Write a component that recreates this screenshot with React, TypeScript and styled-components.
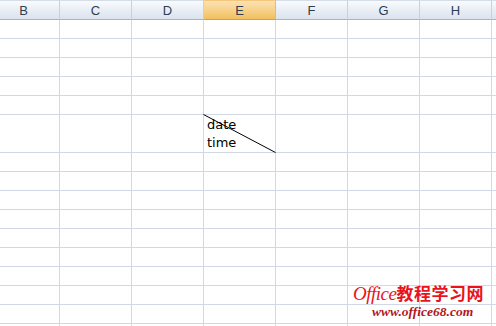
import React from "react";
import styled, { createGlobalStyle } from "styled-components";

const GlobalStyle = createGlobalStyle`
  html, body {
    margin: 0;
    padding: 0;
    background: #fff;
    overflow: hidden;
  }
`;

const Page = styled.div`
  position: relative;
  width: 496px;
  height: 326px;
  overflow: hidden;
  background: #fff;
`;

const Sheet = styled.div`
  display: grid;
  grid-template-columns: repeat(8, 72px);
  margin-left: -12px;
  width: max-content;
`;

const HeaderCell = styled.div<{ $active?: boolean }>`
  box-sizing: border-box;
  height: 20px;
  display: flex;
  align-items: center;
  justify-content: center;
  font-family: "Liberation Sans", Arial, sans-serif;
  font-size: 13px;
  color: #2c3e50;
  border-right: 1px solid ${(p) => (p.$active ? "#f2b759" : "#c5d2df")};
  border-bottom: 1px solid ${(p) => (p.$active ? "#f29436" : "#9eb6ce")};
  border-top: 1px solid ${(p) => (p.$active ? "#f6c77a" : "#d5dee8")};
  background: ${(p) =>
    p.$active
      ? "linear-gradient(#fbe2b3, #f8d18b 50%, #f2bf5c)"
      : "linear-gradient(#f9fbfd, #e9eef5 50%, #dbe3ee)"};
`;

const Cell = styled.div<{ $tall?: boolean }>`
  position: relative;
  box-sizing: border-box;
  height: ${(p) => (p.$tall ? 38 : 19)}px;
  border-right: 1px solid #d0d7e5;
  border-bottom: 1px solid #d0d7e5;
`;

const CellText = styled.div`
  padding: 1px 0 0 3px;
  font-family: "DejaVu Sans", Tahoma, sans-serif;
  font-size: 13px;
  line-height: 18px;
  color: #000;
`;

const Diagonal = styled.svg`
  position: absolute;
  left: -1px;
  top: -1px;
  width: 73px;
  height: 39px;
  overflow: visible;
  pointer-events: none;
`;

const Watermark = styled.div`
  position: absolute;
  right: 12px;
  bottom: 8px;
  display: flex;
  flex-direction: column;
  align-items: center;
  line-height: 1;
`;

const MarkTitle = styled.div`
  display: flex;
  align-items: baseline;
  font-family: "Liberation Serif", "Noto Sans CJK SC", serif;
  font-style: italic;
  font-size: 19px;
  color: #e8141b;
  letter-spacing: -0.5px;
`;

const MarkCjk = styled.span`
  font-family: "Noto Sans CJK SC", sans-serif;
  font-style: normal;
  font-weight: 700;
  font-size: 17px;
  letter-spacing: 0.5px;
`;

const MarkUrl = styled.div`
  margin-top: 2px;
  margin-left: 8px;
  font-family: "Liberation Serif", serif;
  font-style: italic;
  font-weight: 700;
  font-size: 13.5px;
  color: #b3161c;
`;

const columns = ["B", "C", "D", "E", "F", "G", "H", "I"];
const rowCount = 16;

export default function App() {
  return (
    <Page>
      <GlobalStyle />
      <Sheet>
        {columns.map((c) => (
          <HeaderCell key={c} $active={c === "E"}>
            {c === "I" ? "" : c}
          </HeaderCell>
        ))}
        {Array.from({ length: rowCount }).map((_, r) =>
          columns.map((c) => {
            const tall = r === 5;
            const special = tall && c === "E";
            return (
              <Cell key={`${c}${r}`} $tall={tall}>
                {special && (
                  <>
                    <CellText>
                      date
                      <br />
                      time
                    </CellText>
                    <Diagonal viewBox="0 0 73 39">
                      <line x1="0.5" y1="0.5" x2="72.5" y2="38.5" stroke="#000" strokeWidth="1" />
                    </Diagonal>
                  </>
                )}
              </Cell>
            );
          })
        )}
      </Sheet>
      <Watermark>
        <MarkTitle>
          Office<MarkCjk>教程学习网</MarkCjk>
        </MarkTitle>
        <MarkUrl>www.office68.com</MarkUrl>
      </Watermark>
    </Page>
  );
}
